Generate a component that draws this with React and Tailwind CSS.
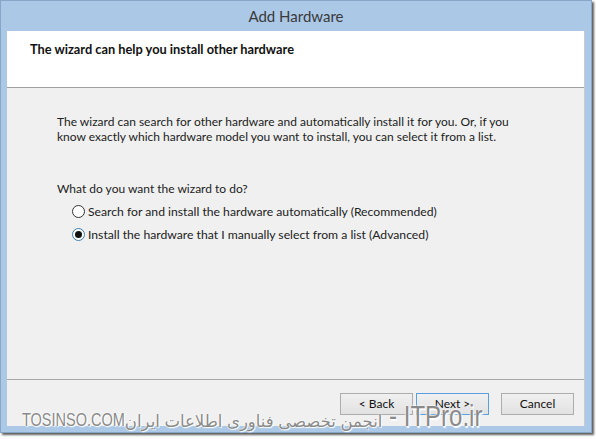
import React from "react";

function Radio({ checked }) {
  return (
    <span
      className={
        "inline-flex items-center justify-center w-[13px] h-[13px] rounded-full border bg-white shrink-0 " +
        (checked ? "border-[#3c7fb1]" : "border-[#333333]")
      }
    >
      {checked ? <span className="w-[7px] h-[7px] rounded-full bg-[#111]" /> : null}
    </span>
  );
}

function Btn({ children, focused }) {
  return (
    <div
      className={
        "w-[73px] h-[22px] flex items-center justify-center text-[12px] text-[#111] bg-gradient-to-b from-[#f0f0f0] to-[#e2e2e2] border " +
        (focused ? "border-[#5a9fe0]" : "border-[#adadad]")
      }
    >
      {children}
    </div>
  );
}

export default function App() {
  return (
    <div className="w-[596px] h-[439px] bg-white relative overflow-hidden" style={{ fontFamily: "Lato, 'Noto Sans', sans-serif" }}>
      <div className="w-[592px] h-[433px] bg-[#abc8e7] border border-[#87a6c8] flex flex-col shadow-[2px_2px_2px_rgba(40,40,40,0.75)]">
        <div className="h-[30px] flex items-center justify-center text-[15px] text-[#3a3a3a]">
          Add Hardware
        </div>
        <div className="flex-1 ml-[6px] mr-[6px] mb-[6px] flex flex-col bg-[#f0f0f0] border-r border-[#c8ccd2]">
          <div className="h-[57px] bg-white border-b border-[#a0a0a0] pl-[23px] pt-[9px] text-[12.8px] font-bold text-[#111]">
            The wizard can help you install other hardware
          </div>
          <div className="h-[291px] pl-[50px] pt-[26px] text-[12px] text-[#222] leading-[15px]">
            <p>
              The wizard can search for other hardware and automatically install it for you. Or, if you
              <br />
              know exactly which hardware model you want to install, you can select it from a list.
            </p>
            <p className="mt-[37px]">What do you want the wizard to do?</p>
            <div className="mt-[8px] ml-[15px] flex flex-col gap-[8px]">
              <label className="flex items-center gap-[3px]">
                <Radio />
                <span className="text-[12.2px]">Search for and install the hardware automatically (Recommended)</span>
              </label>
              <label className="flex items-center gap-[3px]">
                <Radio checked />
                <span className="text-[12.2px]">Install the hardware that I manually select from a list (Advanced)</span>
              </label>
            </div>
          </div>
          <div className="border-t border-[#a8a8a8] flex-1 flex justify-end items-start pt-[13px] pr-[10px]">
            <div className="flex">
              <Btn>&lt; Back</Btn>
              <div className="ml-[3px]">
                <Btn focused>Next &gt;</Btn>
              </div>
              <div className="ml-[12px]">
                <Btn>Cancel</Btn>
              </div>
            </div>
          </div>
        </div>
      </div>
      <div
        className="absolute left-[22px] top-[408px] flex items-end text-[#8a8a8a] [text-shadow:0_0_1px_#fff,0_0_2px_#fff,1px_1px_1px_#fff]"
        style={{ fontFamily: "'Liberation Sans', 'DejaVu Sans', sans-serif" }}
        dir="ltr"
      >
        <span className="text-[14.5px] leading-[16px] inline-block scale-y-[1.3] origin-bottom">TOSINSO.COM</span>
        <span className="text-[16.5px] leading-[18px] inline-block" dir="rtl">انجمن تخصصی فناوری اطلاعات ایران</span>
        <span className="text-[24px] leading-[22px] inline-block scale-y-[1.2] origin-bottom whitespace-pre"> - ITPro.ir</span>
      </div>
    </div>
  );
}
